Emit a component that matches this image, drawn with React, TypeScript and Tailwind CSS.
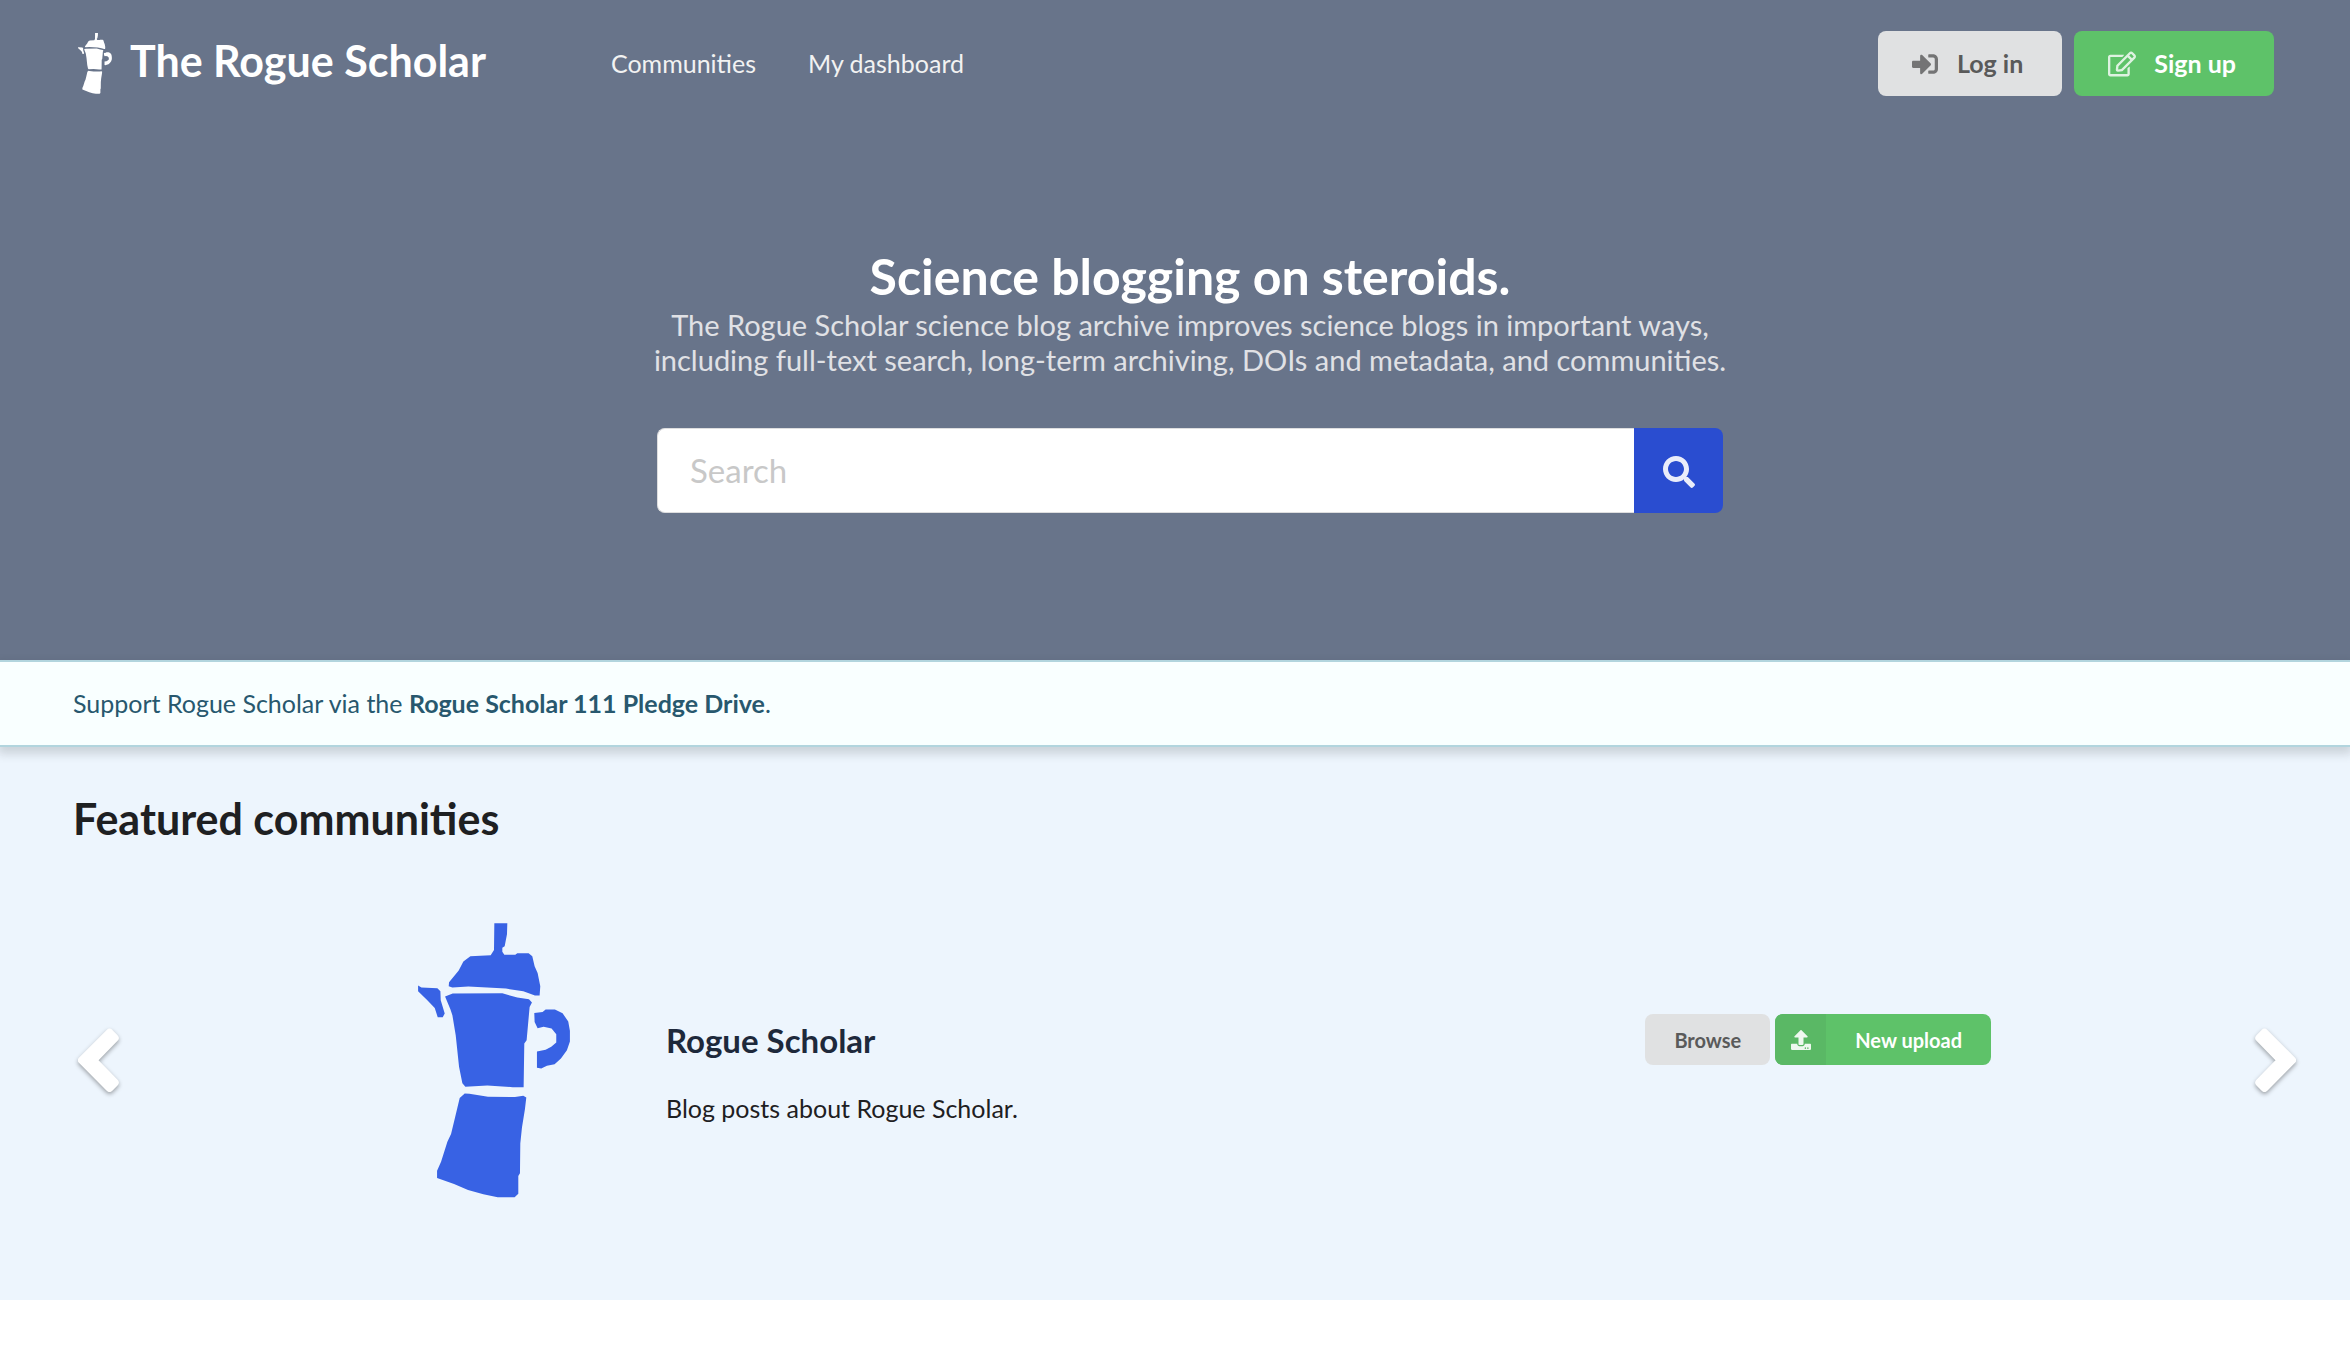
import React from "react";
import { FaRegEdit, FaSearch, FaSignInAlt, FaUpload } from "react-icons/fa";

function MokaPot({ className }: { className: string }) {
  return (
    <svg viewBox="54 38 456 826" className={className} fill="currentColor" aria-hidden="true">
      <path d="M283 39H322L321 72L314 108L307 112V124L313 133H346L352 129H386L397 138L404 168L413 188L421 228L419 256H405L370 243L318 235L205 229L157 232L146 228L147 216L176 181L190 154L211 138L272 135L282 119Z" />
      <path d="M135 259L158 250L307 249L352 262L387 267L396 277L389 290L380 390L373 400L371 531H338L262 526L196 530L187 519L177 470L167 375L157 315L151 297Z" />
      <path d="M54 226L64 232L112 234L121 243L122 270L134 310L128 321H113L104 293L81 269L54 243Z" />
      <path d="M403 308L428 305L437 298H465L488 309L505 334L510 362V394L501 420L483 445L464 462L441 467L424 475L411 473V424L437 419L454 410L469 397V372L455 355L431 350L413 354L404 335Z" />
      <path d="M179 564L194 550L208 551L264 560L345 561L370 557L379 562L375 597L366 652L361 700L360 790L355 798V851L344 862H293L250 853L204 840L162 822L111 804V782L123 755L142 695L153 672L165 622Z" />
    </svg>
  );
}

function Chevron({ flip, label }: { flip?: boolean; label: string }) {
  return (
    <button type="button" aria-label={label} className="shrink-0 text-white">
      <svg
        viewBox="0 0 45 67"
        className={
          flip
            ? "h-[67px] w-[45px] -scale-x-100 drop-shadow-[0_2px_2px_rgba(0,0,0,0.35)]"
            : "h-[67px] w-[45px] drop-shadow-[0_2px_2px_rgba(0,0,0,0.35)]"
        }
        fill="currentColor"
        stroke="currentColor"
        strokeWidth="8"
        strokeLinejoin="round"
        aria-hidden="true"
      >
        <path d="M6 33.3L33.5 5.7L38.7 11L17 33.3L38.7 55.6L33.5 60.9Z" />
      </svg>
    </button>
  );
}

function Header() {
  return (
    <header className="flex items-start pt-[31px] pr-[76px] pl-[78px]">
      <a href="#" className="flex items-start gap-[18px] text-white">
        <MokaPot className="mt-[2px] h-[61px] w-[34px]" />
        <span className="text-[43px] leading-[60px] font-bold">The Rogue Scholar</span>
      </a>
      <nav className="ml-[125px] flex gap-[52px] text-[25px] leading-[65px] text-[#f2f2f2]">
        <a href="#">Communities</a>
        <a href="#">My dashboard</a>
      </nav>
      <div className="ml-auto flex gap-3 text-[25px] font-bold">
        <button type="button" className="flex h-[65px] items-center gap-[19px] rounded-lg bg-[#e0e1e2] pr-[39px] pl-[34px] text-[#5a5a5a]">
          <FaSignInAlt className="size-[26px] opacity-80" />
          Log in
        </button>
        <button type="button" className="flex h-[65px] items-center gap-[18px] rounded-lg bg-[#5ec269] pr-[38px] pl-[34px] text-white">
          <FaRegEdit className="size-[28px] opacity-80" />
          Sign up
        </button>
      </div>
    </header>
  );
}

function Hero() {
  return (
    <section className="flex flex-col items-center pt-[149px] pb-[147px] pl-[30px] text-center">
      <h1 className="text-[50px] leading-[62px] font-bold text-white">Science blogging on steroids.</h1>
      <p className="text-[29px] leading-[35px] text-[#e0e1e5]">
        The Rogue Scholar science blog archive improves science blogs in important ways,
        <br />
        including full-text search, long-term archiving, DOIs and metadata, and communities.
      </p>
      <form role="search" className="mt-[51px] flex h-[85px] w-[1066px] max-w-full">
        <input
          type="search"
          aria-label="Search"
          placeholder="Search"
          className="min-w-0 flex-1 rounded-l-lg border border-r-0 border-[#dededf] bg-white px-8 text-[33px] text-[#1e2022] placeholder:text-[#c8c8c8]"
        />
        <button type="submit" aria-label="Submit search" className="flex w-[89px] items-center justify-center rounded-r-lg bg-[#2a4dd0] pt-[2px] text-white">
          <FaSearch className="size-[32px] opacity-90" />
        </button>
      </form>
    </section>
  );
}

function Featured() {
  return (
    <section className="bg-[#edf5fd] pt-[44px] pb-[102px]">
      <h2 className="px-[73px] text-[43px] leading-[56px] font-bold text-[#1e2022]">Featured communities</h2>
      <div className="mt-[76px] flex items-center pr-[52px] pl-[76px]">
        <Chevron label="Previous community" />
        <article className="mr-[262px] ml-[297px] flex flex-1 items-center">
          <MokaPot className="h-[275px] w-[152px] shrink-0 text-[#3862e4]" />
          <div className="ml-[96px] flex flex-1 items-start justify-between pt-[19px]">
            <div>
              <h3 className="mt-1 text-[33px] leading-[44px] font-bold text-[#1e293b]">
                <a href="#">Rogue Scholar</a>
              </h3>
              <p className="mt-7 text-[25px] leading-[36px] text-[#1e2022]">Blog posts about Rogue Scholar.</p>
            </div>
            <div className="flex gap-[5px] text-[20px] font-bold">
              <button type="button" className="h-[51px] rounded-lg bg-[#e0e1e2] px-[29px] text-[#5a5a5a]">
                Browse
              </button>
              <button type="button" className="flex h-[51px] overflow-hidden rounded-lg bg-[#5ec269] text-white">
                <span className="flex h-full w-[51px] items-center justify-center bg-[#5ab865]">
                  <FaUpload className="size-[20px] opacity-90" />
                </span>
                <span className="self-center px-[29px]">New upload</span>
              </button>
            </div>
          </div>
        </article>
        <Chevron flip label="Next community" />
      </div>
    </section>
  );
}

export default function App() {
  return (
    <div className="min-h-screen overflow-x-hidden bg-white font-['Lato',sans-serif]">
      <div className="bg-[#68748a]">
        <Header />
        <Hero />
      </div>
      <div className="relative border-y-2 border-[#b2d5de] bg-[#f9ffff] px-[73px] py-[24px] text-[25px] leading-[35px] text-[#28586e] shadow-[0_5px_9px_2px_rgba(34,36,38,0.16)]">
        Support Rogue Scholar via the{" "}
        <a href="#" className="font-bold">
          Rogue Scholar 111 Pledge Drive
        </a>
        .
      </div>
      <Featured />
    </div>
  );
}
